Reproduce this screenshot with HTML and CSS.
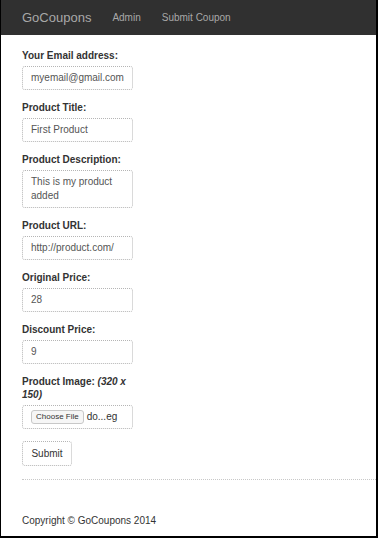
FILE: index.html
```html
<!DOCTYPE html>
<html lang="en">
<head>
  <meta charset="UTF-8">
  <title>GoCoupons - Submit Coupon</title>
  <link rel="stylesheet" href="styles.css">
</head>
<body>
  <div class="frame">
    <nav class="navbar">
      <a class="brand" href="#">GoCoupons</a>
      <a class="nav-link" href="#">Admin</a>
      <a class="nav-link" href="#">Submit Coupon</a>
    </nav>

    <form class="coupon-form">
      <div class="form-group">
        <label>Your Email address:</label>
        <div class="field">myemail@gmail.com</div>
      </div>
      <div class="form-group">
        <label>Product Title:</label>
        <div class="field">First Product</div>
      </div>
      <div class="form-group">
        <label>Product Description:</label>
        <div class="field textarea">This is my product added</div>
      </div>
      <div class="form-group">
        <label>Product URL:</label>
        <div class="field">http://product.com/</div>
      </div>
      <div class="form-group">
        <label>Original Price:</label>
        <div class="field">28</div>
      </div>
      <div class="form-group">
        <label>Discount Price:</label>
        <div class="field">9</div>
      </div>
      <div class="form-group">
        <label class="wrap">Product Image: <em>(320 x</em><br><em>150)</em></label>
        <div class="field file">
          <span class="file-btn">Choose File</span>
          <span class="file-name">do...eg</span>
        </div>
      </div>
      <button type="button" class="btn">Submit</button>
    </form>

    <hr class="divider">

    <footer class="footer">Copyright &copy; GoCoupons 2014</footer>
  </div>
</body>
</html>
```

FILE: styles.css
```css
* {
  box-sizing: border-box;
}

html, body {
  margin: 0;
  padding: 0;
  height: 100%;
  font-family: "Liberation Sans", Arial, Helvetica, sans-serif;
  font-size: 10px;
  color: #333;
  background: #fff;
}

.frame {
  height: 100%;
  border-left: 1px solid #000;
  border-right: 2px solid #000;
  border-bottom: 2px solid #000;
  display: flex;
  flex-direction: column;
}

.navbar {
  height: 35px;
  background-color: #303030;
  display: flex;
  align-items: center;
  padding-left: 21px;
  flex-shrink: 0;
}

.navbar a {
  color: #a8a8a8;
  text-decoration: none;
}

.brand {
  font-size: 13px;
  margin-right: 21px;
}

.nav-link {
  font-size: 10px;
  margin-right: 21px;
}

.coupon-form {
  padding: 14px 0 0 21px;
}

.form-group {
  margin-bottom: 11px;
}

label {
  display: block;
  font-weight: bold;
  line-height: 14px;
  margin-bottom: 3px;
}

label.wrap {
  line-height: 13px;
  margin-bottom: 4px;
}

.field {
  width: 111px;
  height: 24px;
  padding: 0 8px;
  line-height: 22px;
  color: #555;
  border: 1px dotted #b5b5b5;
  border-radius: 3px;
  white-space: nowrap;
  overflow: hidden;
}

.field.textarea {
  height: 38px;
  line-height: 14px;
  padding-top: 4px;
  white-space: normal;
}

.field.file {
  display: flex;
  align-items: center;
  gap: 3px;
  color: #333;
}

.file-btn {
  font-size: 8px;
  line-height: 12px;
  padding: 0 4px;
  border: 1px solid #c8c8c8;
  border-radius: 3px;
  background: #f6f6f6;
}

.btn {
  width: 50px;
  height: 25px;
  font-family: inherit;
  font-size: 10px;
  color: #333;
  background: #fff;
  border: 1px dotted #b5b5b5;
  border-radius: 3px;
  padding: 0;
  margin-top: 1px;
}

.divider {
  margin: 13px 0 0 21px;
  border: 0;
  border-top: 1px dotted #c8c8c8;
}

.footer {
  padding: 35px 0 0 21px;
}
```
